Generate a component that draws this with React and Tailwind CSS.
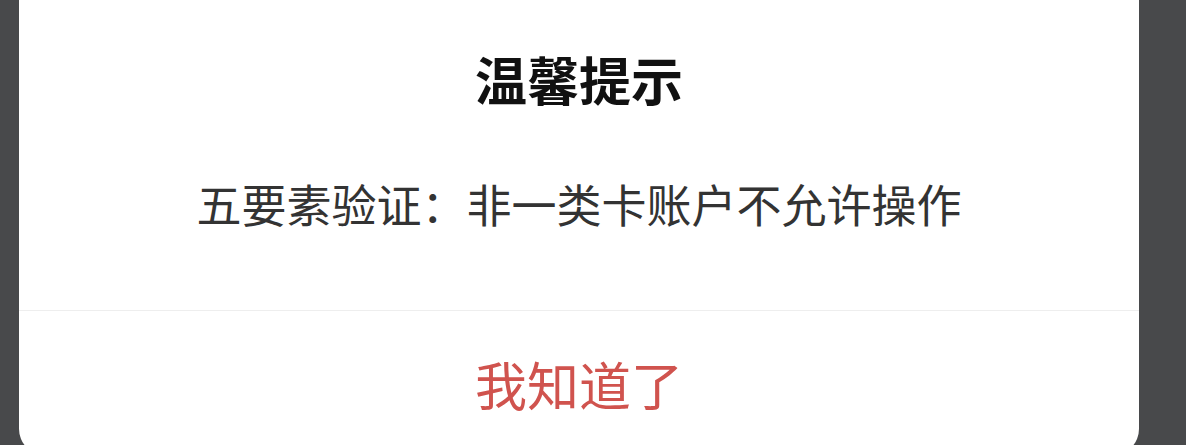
export default function App() {
  const cjk = { fontFamily: '"Noto Sans CJK SC", "Noto Sans", sans-serif' };
  return (
    <div className="h-[445px] w-full overflow-hidden bg-[#48494b] pl-[19px] pr-[47px]" style={cjk}>
      <div className="-mt-[26px] flex flex-col rounded-[26px] bg-white">
        <div className="pt-[79px] text-center text-[52px] font-bold leading-[52px] text-[#111111]">
          温馨提示
        </div>
        <div className="mt-[76px] text-center text-[45px] leading-[45px] text-[#333333]">
          五要素验证：非一类卡账户不允许操作
        </div>
        <div className="mt-[84px] h-px bg-[#eeeeee]" />
        <div className="pb-[45px] pt-[47px] text-center text-[52px] leading-[52px] text-[#d0534e]">
          我知道了
        </div>
      </div>
    </div>
  );
}
